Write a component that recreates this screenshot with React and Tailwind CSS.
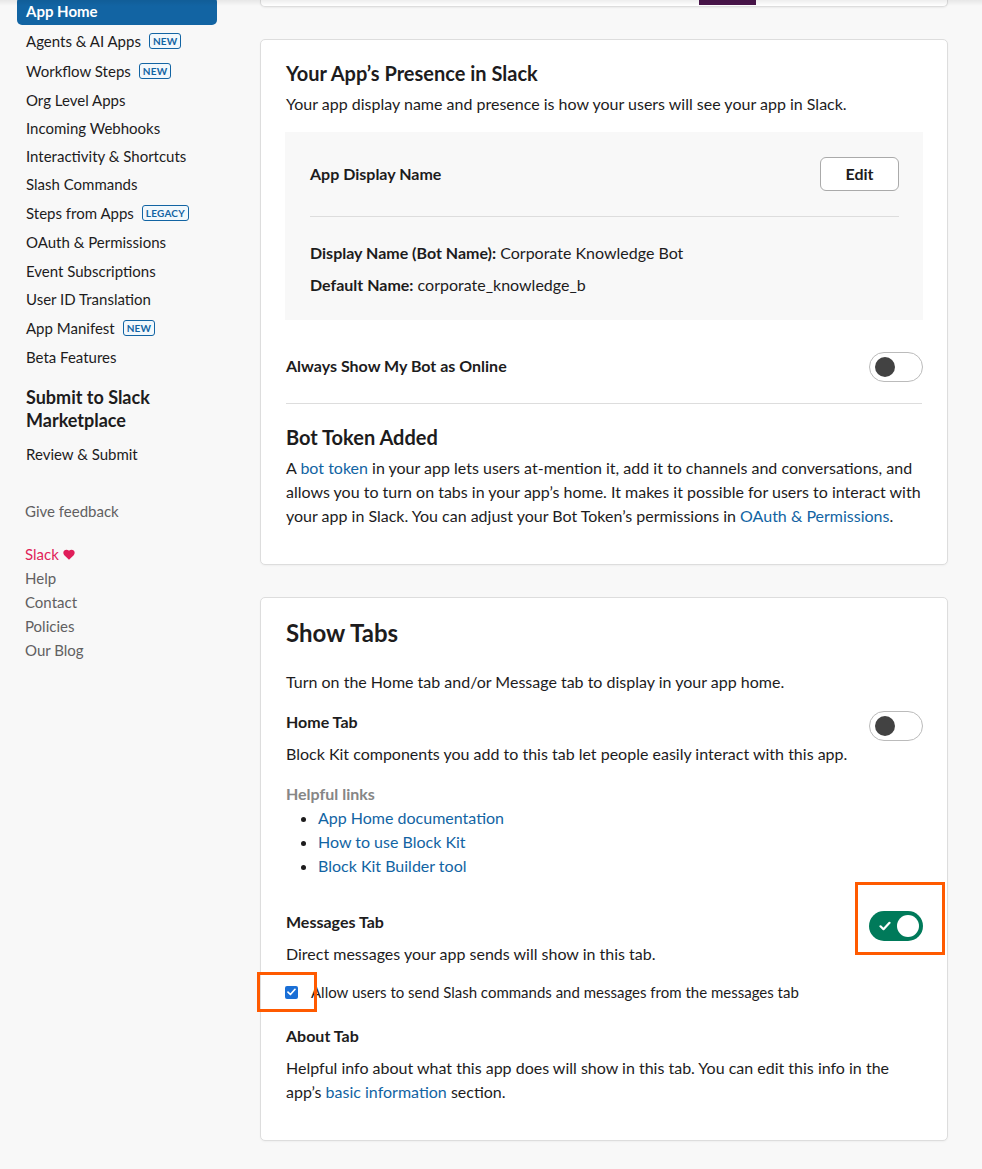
import React from "react";

const font = { fontFamily: "Lato, 'Noto Sans', sans-serif" };

function Badge({ children }) {
  return (
    <span className="ml-[8px] inline-flex h-[16px] items-center rounded-[3px] border border-[#1264a3] bg-[#f2f8fc] px-[3px] text-[10px] font-bold leading-none tracking-[0.2px] text-[#1264a3]">
      {children}
    </span>
  );
}

function NavItem({ label, badge, h = "h-[28px]" }) {
  return (
    <div className={`flex ${h} items-center px-[9px] text-[15px] text-[#1d1c1d]`}>
      <span>{label}</span>
      {badge && <Badge>{badge}</Badge>}
    </div>
  );
}

function ToggleOff() {
  return (
    <div className="-mr-px flex h-[30px] w-[54px] shrink-0 items-center rounded-full border border-[#bbbbbb] bg-white">
      <div className="ml-[5px] h-[20px] w-[20px] rounded-full bg-[#424242]" />
    </div>
  );
}

function ToggleOn() {
  return (
    <div className="relative -mr-px h-[30px] w-[54px] shrink-0">
      <div className="flex h-[30px] w-[54px] items-center justify-between rounded-full bg-[#007a5a] pl-[10px] pr-[4px]">
        <svg width="12" height="10" viewBox="0 0 12 10" fill="none">
          <path d="M1.5 5.3 L4.5 8.2 L10.5 1.8" stroke="#ffffff" strokeWidth="2.2" strokeLinecap="round" strokeLinejoin="round" />
        </svg>
        <div className="h-[22px] w-[22px] rounded-full bg-white" />
      </div>
      <div className="absolute left-[-14px] top-[-29px] h-[73px] w-[90px] border-[3px] border-[#ff5a00]" />
    </div>
  );
}

function Link({ children }) {
  return <span className="text-[#1264a3]">{children}</span>;
}

export default function App() {
  return (
    <div style={font} className="relative min-h-[1169px] w-full bg-[#f8f8f8] text-[#1d1c1d]">
      <div className="pointer-events-none absolute left-0 right-0 top-0 z-10 h-[6px] bg-gradient-to-b from-black/[0.07] to-transparent" />
      <div className="flex">
        {/* Sidebar */}
        <aside className="w-[260px] shrink-0 pl-[17px]">
          <div className="w-[200px]">
            <div className="-mt-[3px] flex h-[28px] items-center rounded-[5px] bg-[#1264a3] px-[9px] text-[15px] font-bold text-white">
              App Home
            </div>
            <div className="mt-[1px]">
              <NavItem label="Agents & AI Apps" badge="NEW" h="h-[30px]" />
              <NavItem label="Workflow Steps" badge="NEW" h="h-[30px]" />
              <NavItem label="Org Level Apps" />
              <NavItem label="Incoming Webhooks" />
              <NavItem label="Interactivity & Shortcuts" />
              <NavItem label="Slash Commands" />
              <NavItem label="Steps from Apps" badge="LEGACY" h="h-[30px]" />
              <NavItem label="OAuth & Permissions" h="h-[29px]" />
              <NavItem label="Event Subscriptions" />
              <NavItem label="User ID Translation" />
              <NavItem label="App Manifest" badge="NEW" h="h-[30px]" />
              <NavItem label="Beta Features" />
            </div>
            <div className="mt-[15px] px-[9px] text-[18px] font-bold leading-[23px]">
              Submit to Slack
              <br />
              Marketplace
            </div>
            <div className="mt-[8px]">
              <NavItem label="Review & Submit" />
            </div>
            <div className="mt-[29px] flex h-[28px] items-center px-[8px] text-[15px] text-[#616061]">
              Give feedback
            </div>
            <div className="mt-[17px] px-[8px] text-[15px] leading-[24px] text-[#616061]">
              <div className="flex items-center text-[#e01e5a]">
                Slack
                <svg className="ml-[4px]" width="12" height="11" viewBox="0 0 24 22">
                  <path
                    d="M12 21.5 L2.6 12.3 C0 9.7 0 5.6 2.6 3 C5.1 0.6 9.1 0.7 11.5 3.2 L12 3.7 L12.5 3.2 C14.9 0.7 18.9 0.6 21.4 3 C24 5.6 24 9.7 21.4 12.3 Z"
                    fill="#e01e5a"
                  />
                </svg>
              </div>
              <div>Help</div>
              <div>Contact</div>
              <div>Policies</div>
              <div>Our Blog</div>
            </div>
          </div>
        </aside>

        {/* Main */}
        <main className="flex-1 pr-[34px]">
          {/* top cut card */}
          <div className="h-[7px] rounded-b-[5px] border-x border-b border-[#dddddd] bg-white shadow-[0_1px_2px_rgba(0,0,0,0.06)]">
            <div className="ml-[438px] h-[5px] w-[57px] bg-[#4a154b]" />
          </div>

          {/* Card 1 */}
          <section className="mt-[32px] rounded-[5px] border border-[#dddddd] bg-white px-[25px] pb-[36px] pt-[19px] shadow-[0_1px_2px_rgba(0,0,0,0.04)]">
            <h2 className="text-[20px] font-bold leading-[28px]">Your App’s Presence in Slack</h2>
            <p className="mt-[5px] text-[16px] leading-[24px]">
              Your app display name and presence is how your users will see your app in Slack.
            </p>
            <div className="-mx-px mt-[16px] bg-[#f8f8f8] pb-[23px] pl-[25px] pr-[24px] pt-[25px]">
              <div className="flex items-center justify-between">
                <span className="text-[16px] font-bold">App Display Name</span>
                <div className="flex h-[34px] w-[79px] items-center justify-center rounded-[6px] border border-[#aaaaaa] bg-white text-[16px] font-bold">
                  Edit
                </div>
              </div>
              <div className="mt-[25px] h-px bg-[#dddddd]" />
              <p className="mt-[24px] text-[16px] leading-[24px]">
                <span className="font-bold">Display Name (Bot Name):</span> Corporate Knowledge Bot
              </p>
              <p className="mt-[8px] text-[16px] leading-[24px]">
                <span className="font-bold">Default Name:</span> corporate_knowledge_b
              </p>
            </div>
            <div className="mt-[32px] flex items-center justify-between">
              <span className="-mt-[3px] text-[16px] font-bold">Always Show My Bot as Online</span>
              <ToggleOff />
            </div>
            <div className="mt-[21px] h-px bg-[#dddddd]" />
            <h2 className="mt-[19px] text-[20px] font-bold leading-[28px]">Bot Token Added</h2>
            <p className="mt-[5px] text-[16px] leading-[24px]">
              A <Link>bot token</Link> in your app lets users at-mention it, add it to channels and conversations, and
              allows you to turn on tabs in your app’s home. It makes it possible for users to interact with your app in
              Slack. You can adjust your Bot Token’s permissions in <Link>OAuth &amp; Permissions</Link>.
            </p>
          </section>

          {/* Card 2 */}
          <section className="mt-[32px] rounded-[5px] border border-[#dddddd] bg-white px-[25px] pb-[36px] pt-[19px] shadow-[0_1px_2px_rgba(0,0,0,0.04)]">
            <h2 className="text-[24px] font-bold leading-[32px]">Show Tabs</h2>
            <p className="mt-[21px] text-[16px] leading-[24px]">
              Turn on the Home tab and/or Message tab to display in your app home.
            </p>

            <div className="mt-[16px] flex items-start justify-between">
              <div>
                <div className="text-[16px] font-bold leading-[24px]">Home Tab</div>
                <p className="mt-[8px] text-[16px] leading-[24px]">
                  Block Kit components you add to this tab let people easily interact with this app.
                </p>
              </div>
              <div className="mt-[1px]">
                <ToggleOff />
              </div>
            </div>

            <div className="mt-[16px] text-[16px] font-bold leading-[24px] text-[#868686]">Helpful links</div>
            <ul className="list-disc pl-[32px] text-[16px] leading-[24px] text-[#1264a3] marker:text-[#1d1c1d]">
              <li>App Home documentation</li>
              <li>How to use Block Kit</li>
              <li>Block Kit Builder tool</li>
            </ul>

            <div className="mt-[32px] flex items-start justify-between">
              <div>
                <div className="text-[16px] font-bold leading-[24px]">Messages Tab</div>
                <p className="mt-[8px] text-[16px] leading-[24px]">Direct messages your app sends will show in this tab.</p>
              </div>
              <div className="mt-[1px]">
                <ToggleOn />
              </div>
            </div>

            <div className="mt-[14px] flex h-[24px] items-center">
              <div className="relative ml-[-1px] h-[13px] w-[13px] shrink-0">
                <div className="flex h-[13px] w-[13px] items-center justify-center rounded-[2px] bg-[#1a6fd6]">
                  <svg width="9" height="8" viewBox="0 0 9 8" fill="none">
                    <path d="M1 4.2 L3.4 6.5 L8 1.3" stroke="#ffffff" strokeWidth="1.7" strokeLinecap="round" strokeLinejoin="round" />
                  </svg>
                </div>
                <div className="absolute left-[-28px] top-[-14px] h-[40px] w-[60px] border-[3px] border-[#ff5a00]" />
              </div>
              <span className="ml-[13px] text-[15px] leading-[24px]">
                Allow users to send Slash commands and messages from the messages tab
              </span>
            </div>

            <div className="mt-[20px] text-[16px] font-bold leading-[24px]">About Tab</div>
            <p className="mt-[8px] text-[16px] leading-[24px]">
              Helpful info about what this app does will show in this tab. You can edit this info in the app’s{" "}
              <Link>basic information</Link> section.
            </p>
          </section>
        </main>
      </div>
    </div>
  );
}
